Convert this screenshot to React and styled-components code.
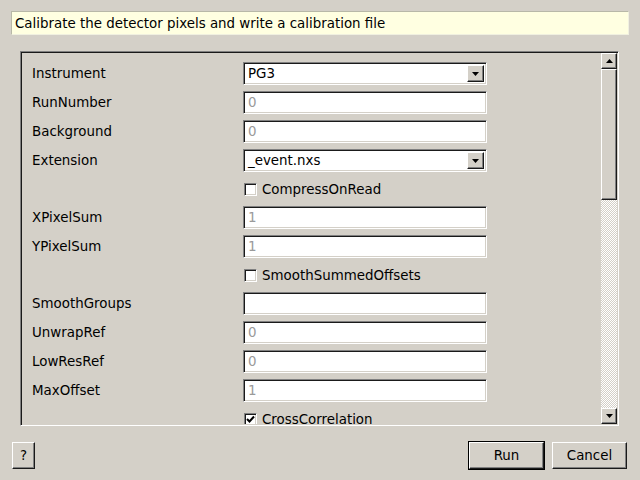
import styled, { createGlobalStyle } from "styled-components";

// Qt "Windows" style algorithm dialog

const GlobalStyle = createGlobalStyle`
  body {
    margin: 0;
    background: #d4d0c8;
    font-family: "DejaVu Sans", "Liberation Sans", sans-serif;
    font-size: 13.4px;
  }
`;

const rows = [
  { label: "Instrument", kind: "combo", value: "PG3" },
  { label: "RunNumber", kind: "text", placeholder: "0" },
  { label: "Background", kind: "text", placeholder: "0" },
  { label: "Extension", kind: "combo", value: "_event.nxs" },
  { label: "CompressOnRead", kind: "check" },
  { label: "XPixelSum", kind: "text", placeholder: "1" },
  { label: "YPixelSum", kind: "text", placeholder: "1" },
  { label: "SmoothSummedOffsets", kind: "check" },
  { label: "SmoothGroups", kind: "text", placeholder: "" },
  { label: "UnwrapRef", kind: "text", placeholder: "0" },
  { label: "LowResRef", kind: "text", placeholder: "0" },
  { label: "MaxOffset", kind: "text", placeholder: "1" },
  { label: "CrossCorrelation", kind: "check", checked: true },
];

const Arrow = ({ up }) => (
  <svg width="7" height="4" viewBox="0 0 7 4">
    {up ? (
      <polygon points="3.5,0 7,4 0,4" fill="#000" />
    ) : (
      <polygon points="0,0 7,0 3.5,4" fill="#000" />
    )}
  </svg>
);

const App = () => {
  return (
    <>
      <GlobalStyle />
      <Page>
        <Description>
          Calibrate the detector pixels and write a calibration file
        </Description>

        <Frame>
          <Content>
            {rows.map((row) =>
              row.kind === "check" ? (
                <CheckRow key={row.label}>
                  <span />
                  <CheckLabel>
                    <CheckBox>
                      {row.checked && (
                        <svg width="9" height="9" viewBox="0 0 9 9">
                          <path
                            d="M1 4 L3.5 6.5 L8 1.5"
                            stroke="#000"
                            strokeWidth="2"
                            fill="none"
                          />
                        </svg>
                      )}
                    </CheckBox>
                    {row.label}
                  </CheckLabel>
                </CheckRow>
              ) : (
                <FieldRow key={row.label}>
                  <Label>{row.label}</Label>
                  {row.kind === "combo" ? (
                    <Combo>
                      <ComboText>{row.value}</ComboText>
                      <ComboButton>
                        <Arrow />
                      </ComboButton>
                    </Combo>
                  ) : (
                    <Field>{row.placeholder}</Field>
                  )}
                </FieldRow>
              )
            )}
          </Content>

          <ScrollBar>
            <ScrollButton>
              <Arrow up />
            </ScrollButton>
            <Handle />
            <Trough />
            <ScrollButton>
              <Arrow />
            </ScrollButton>
          </ScrollBar>
        </Frame>

        <ButtonRow>
          <Button $w={23}>?</Button>
          <RightButtons>
            <Button $w={75} $default>
              Run
            </Button>
            <Button $w={75}>Cancel</Button>
          </RightButtons>
        </ButtonRow>
      </Page>
    </>
  );
};

const Page = styled.div`
  width: 640px;
  height: 480px;
  display: flex;
  flex-direction: column;
  background: #d4d0c8;
  color: #000;
  overflow: hidden;
`;

const Description = styled.div`
  margin: 11px 11px 0 11px;
  height: 24px;
  box-sizing: border-box;
  border: 1px solid #b8b8a8;
  border-right-color: #f0f0e0;
  border-bottom-color: #f0f0e0;
  background: #ffffe1;
  padding: 0 3px;
  display: flex;
  align-items: center;
`;

const Frame = styled.div`
  margin: 16px 21px 0 20px;
  height: 375px;
  box-sizing: border-box;
  display: flex;
  border-top: 1px solid #808080;
  border-left: 1px solid #808080;
  border-right: 1px solid #ffffff;
  border-bottom: 1px solid #ffffff;
  box-shadow: inset 1px 1px 0 #1a1a1a, inset -1px -1px 0 #d4d0c8;
  padding: 1px;
`;

const Content = styled.div`
  flex: 1;
  overflow: hidden;
  padding: 9px 0 0 10px;
  display: flex;
  flex-direction: column;
  gap: 6px;
`;

const FieldRow = styled.div`
  display: grid;
  grid-template-columns: 211px 244px;
  align-items: center;
  height: 23px;
  flex-shrink: 0;
`;

const CheckRow = styled(FieldRow)`
  height: 22px;
`;

const Label = styled.div`
  white-space: nowrap;
`;

const sunken = `
  box-sizing: border-box;
  background: #fff;
  border-top: 1px solid #808080;
  border-left: 1px solid #808080;
  border-right: 1px solid #ffffff;
  border-bottom: 1px solid #ffffff;
  box-shadow: inset 1px 1px 0 #1a1a1a, inset -1px -1px 0 #d4d0c8;
`;

const raised = `
  box-sizing: border-box;
  background: #d4d0c8;
  border-top: 1px solid #ffffff;
  border-left: 1px solid #ffffff;
  border-right: 1px solid #1a1a1a;
  border-bottom: 1px solid #1a1a1a;
  box-shadow: inset -1px -1px 0 #808080;
`;

const Field = styled.div`
  ${sunken}
  height: 23px;
  padding: 0 4px;
  display: flex;
  align-items: center;
  color: #9a9a9a;
`;

const Combo = styled.div`
  ${sunken}
  height: 23px;
  display: flex;
  align-items: center;
  padding: 2px 2px 2px 4px;
`;

const ComboText = styled.div`
  flex: 1;
`;

const ComboButton = styled.div`
  ${raised}
  width: 17px;
  height: 17px;
  display: flex;
  align-items: center;
  justify-content: center;
`;

const CheckLabel = styled.div`
  display: flex;
  align-items: center;
  gap: 5px;
  padding-left: 1px;
  white-space: nowrap;
`;

const CheckBox = styled.div`
  ${sunken}
  width: 13px;
  height: 13px;
  display: flex;
  align-items: center;
  justify-content: center;
`;

const ScrollBar = styled.div`
  width: 16px;
  display: flex;
  flex-direction: column;
`;

const ScrollButton = styled.div`
  ${raised}
  width: 16px;
  height: 16px;
  display: flex;
  align-items: center;
  justify-content: center;
  flex-shrink: 0;
`;

const Handle = styled.div`
  ${raised}
  height: 131px;
  flex-shrink: 0;
`;

const Trough = styled.div`
  flex: 1;
  background: repeating-conic-gradient(#ffffff 0 25%, #d4d0c8 0 50%) 0 0 / 2px
    2px;
`;

const ButtonRow = styled.div`
  margin-top: 15px;
  padding: 0 13px 0 12px;
  display: flex;
  justify-content: space-between;
`;

const RightButtons = styled.div`
  display: flex;
  gap: 8px;
`;

const Button = styled.button`
  ${raised}
  width: ${(p) => p.$w}px;
  height: 27px;
  font-family: inherit;
  font-size: 13.4px;
  color: #000;
  padding: 0;
  margin-top: 1px;
  ${(p) =>
    p.$default &&
    `
    outline: 1px solid #000;
  `}
`;

export default App;
